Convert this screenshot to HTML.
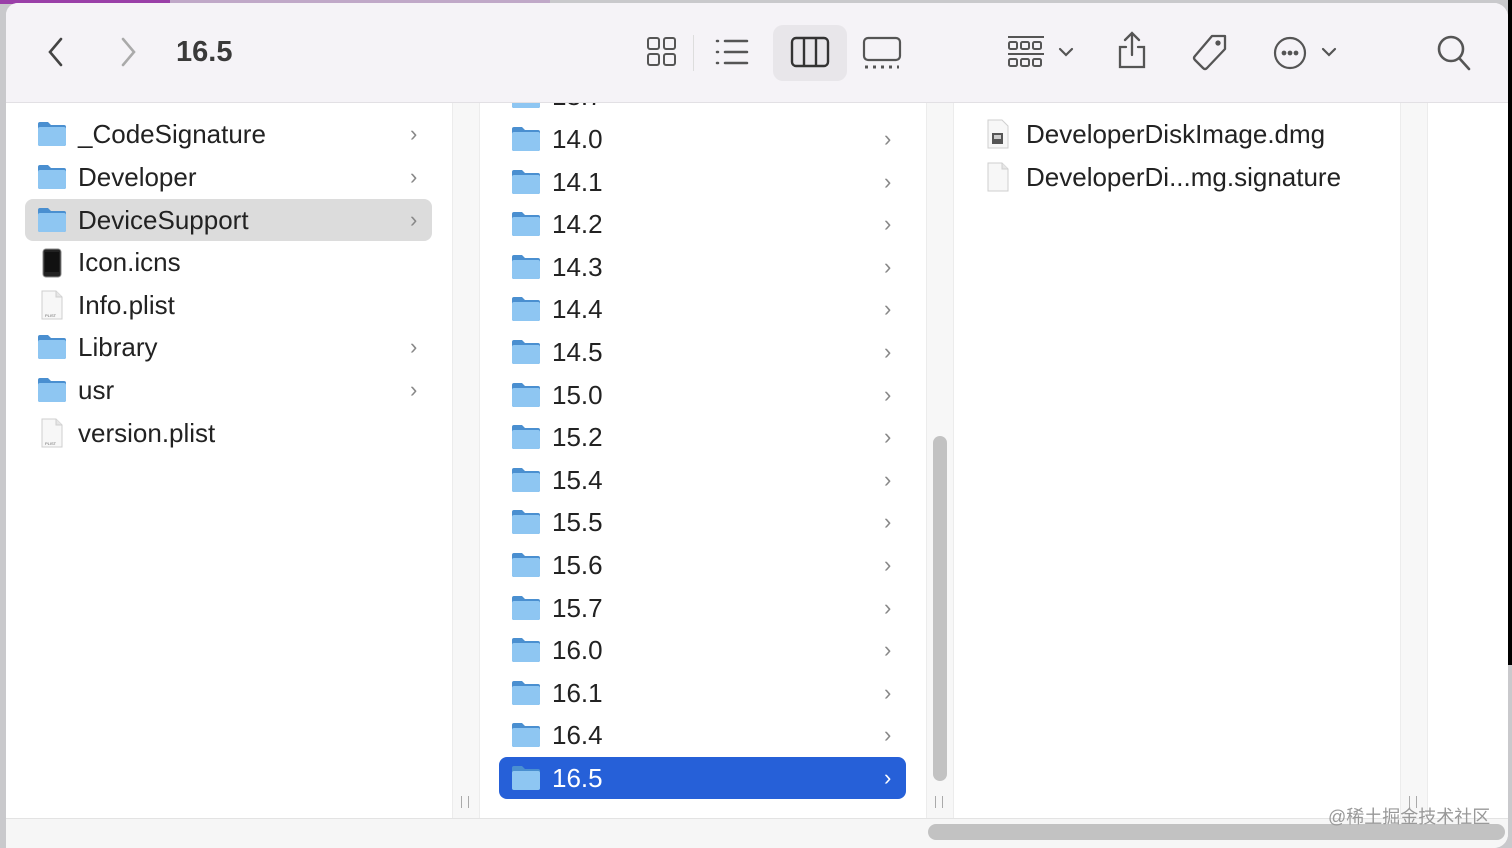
<!DOCTYPE html>
<html><head><meta charset="utf-8">
<style>
*{margin:0;padding:0;box-sizing:border-box}
html,body{width:1512px;height:848px;overflow:hidden;background:#c9c9cc;font-family:"Liberation Sans","Noto Sans CJK SC",sans-serif}
.abs{position:absolute}
#win{position:absolute;left:6px;top:3px;width:1502px;height:845px;background:#fff;border-radius:12px 14px 14px 0;overflow:hidden}
#tb{position:absolute;left:0;top:0;width:1502px;height:100px;background:#f5f3f7;border-bottom:1px solid #e2e0e4}
.row{position:absolute;height:42px;line-height:42px;font-size:26px;color:#222}
.row .ic{position:absolute;top:8px}
.row .t{position:absolute;left:0}
.chev{position:absolute;font-size:22px;color:#888}
.sel{background:#2660d8;color:#fff;border-radius:8px}
.sel .chev{color:#fff}
</style></head><body>
<div class="abs" style="left:0;top:0;width:170px;height:4px;background:#9a3fa8"></div>
<div class="abs" style="left:170px;top:0;width:380px;height:3px;background:#c0a8c8"></div>
<div class="abs" style="left:1508px;top:0;width:4px;height:665px;background:#000"></div>
<svg width="0" height="0" style="position:absolute"><defs>
<symbol id="fold" viewBox="0 0 30 26"><path d="M1 3q0-2 2-2h8l3 3h13q2 0 2 2v17q0 2-2 2H3q-2 0-2-2z" fill="#4a8fd0"/><path d="M1 8q0-2 2-2h24q2 0 2 2v15q0 2-2 2H3q-2 0-2-2z" fill="#8ec6f2"/></symbol>
<symbol id="doc" viewBox="0 0 24 30"><path d="M2 1h14l6 6v22H2z" fill="#f7f7f7" stroke="#cfcfcf"/><path d="M16 1v6h6" fill="#e6e6e6" stroke="#cfcfcf"/></symbol>
</defs></svg>
<div id="win">
<div id="tb">
<svg class="abs" style="left:40px;top:34px" width="20" height="30" viewBox="0 0 20 30"><path d="M15 2L4 15l11 13" fill="none" stroke="#444" stroke-width="2.6" stroke-linecap="round"/></svg>
<svg class="abs" style="left:112px;top:34px" width="20" height="30" viewBox="0 0 20 30"><path d="M5 2l11 13L5 28" fill="none" stroke="#aaa" stroke-width="2.6" stroke-linecap="round"/></svg>
<div class="abs" style="left:170px;top:33px;font-size:29px;font-weight:bold;color:#3a3a3a">16.5</div>
<svg class="abs" style="left:640px;top:33px" width="32" height="32" viewBox="0 0 32 32" fill="none" stroke="#555" stroke-width="2"><rect x="2" y="2" width="11" height="11" rx="2"/><rect x="18" y="2" width="11" height="11" rx="2"/><rect x="2" y="18" width="11" height="11" rx="2"/><rect x="18" y="18" width="11" height="11" rx="2"/></svg>
<div class="abs" style="left:687px;top:32px;width:1px;height:36px;background:#ddd"></div>
<svg class="abs" style="left:708px;top:34px" width="36" height="30" viewBox="0 0 36 30" stroke="#555" stroke-width="2.5" stroke-linecap="round"><path d="M3 4h1M3 15h1M3 26h1M11 4h22M11 15h22M11 26h22"/></svg>
<div class="abs" style="left:767px;top:22px;width:74px;height:56px;background:#e8e6ea;border-radius:10px"></div>
<svg class="abs" style="left:784px;top:33px" width="40" height="32" viewBox="0 0 40 32" fill="none" stroke="#333" stroke-width="2.4"><rect x="2" y="2" width="36" height="28" rx="4"/><path d="M14 2v28M26 2v28"/></svg>
<svg class="abs" style="left:856px;top:33px" width="40" height="34" viewBox="0 0 40 34" fill="none" stroke="#555" stroke-width="2.2"><rect x="2" y="2" width="36" height="22" rx="4"/><path d="M3 31h3M11 31h3M19 31h3M27 31h3M35 31h2" stroke-width="3"/></svg>
<svg class="abs" style="left:1000px;top:32px" width="40" height="36" viewBox="0 0 40 36" fill="none" stroke="#555" stroke-width="2"><path d="M2 2h36"/><rect x="3" y="7" width="8" height="7" rx="1.5"/><rect x="15" y="7" width="8" height="7" rx="1.5"/><rect x="27" y="7" width="8" height="7" rx="1.5"/><path d="M2 19h36"/><rect x="3" y="24" width="8" height="7" rx="1.5"/><rect x="15" y="24" width="8" height="7" rx="1.5"/><rect x="27" y="24" width="8" height="7" rx="1.5"/></svg>
<svg class="abs" style="left:1052px;top:43px" width="16" height="12" viewBox="0 0 16 12"><path d="M2 3l6 6 6-6" fill="none" stroke="#555" stroke-width="2.2" stroke-linecap="round"/></svg>
<svg class="abs" style="left:1110px;top:27px" width="32" height="40" viewBox="0 0 32 40" fill="none" stroke="#555" stroke-width="2.3" stroke-linecap="round"><path d="M16 3v22M9 10l7-7 7 7M10 17H4v20h24V17h-6"/></svg>
<svg class="abs" style="left:1184px;top:30px" width="40" height="40" viewBox="0 0 40 40" fill="none" stroke="#555" stroke-width="2.3"><path d="M22 3h13v13L17 35q-2 2-4 0L5 27q-2-2 0-4z" stroke-linejoin="round"/><circle cx="28" cy="10" r="1.5" fill="#555"/></svg>
<svg class="abs" style="left:1266px;top:32px" width="36" height="36" viewBox="0 0 36 36" fill="none" stroke="#555" stroke-width="2.2"><circle cx="18" cy="18" r="15"/><circle cx="12" cy="18" r="1.3" fill="#555"/><circle cx="18" cy="18" r="1.3" fill="#555"/><circle cx="24" cy="18" r="1.3" fill="#555"/></svg>
<svg class="abs" style="left:1315px;top:43px" width="16" height="12" viewBox="0 0 16 12"><path d="M2 3l6 6 6-6" fill="none" stroke="#555" stroke-width="2.2" stroke-linecap="round"/></svg>
<svg class="abs" style="left:1430px;top:31px" width="36" height="38" viewBox="0 0 36 38" fill="none" stroke="#555" stroke-width="2.6" stroke-linecap="round"><circle cx="15" cy="15" r="12"/><path d="M24 25l9 10"/></svg>
</div>

<div class="abs" style="left:446px;top:100px;width:28px;height:715px;background:#f7f7f7;border-left:1px solid #ececec;border-right:1px solid #ececec"></div>
<div class="abs" style="left:920px;top:100px;width:28px;height:715px;background:#f7f7f7;border-left:1px solid #ececec;border-right:1px solid #ececec"></div>
<div class="abs" style="left:1394px;top:100px;width:28px;height:715px;background:#f7f7f7;border-left:1px solid #ececec;border-right:1px solid #ececec"></div>
<div class="abs" style="left:455px;top:793px;width:8px;height:12px;border-left:1.5px solid #aaa;border-right:1.5px solid #aaa"></div>
<div class="abs" style="left:929px;top:793px;width:8px;height:12px;border-left:1.5px solid #aaa;border-right:1.5px solid #aaa"></div>
<div class="abs" style="left:1403px;top:793px;width:8px;height:12px;border-left:1.5px solid #aaa;border-right:1.5px solid #aaa"></div>
<div class="abs" style="left:927px;top:433px;width:14px;height:345px;background:#c2c2c2;border-radius:7px"></div>
<div class="abs" style="left:0;top:815px;width:1502px;height:30px;background:#f6f6f6;border-top:1px solid #e3e3e3"></div>
<div class="abs" style="left:922px;top:821px;width:577px;height:16px;background:#c2c2c2;border-radius:8px"></div>
<div class="abs" style="left:1322px;top:800px;font-size:18px;color:#999">@稀土掘金技术社区</div>

<div class="row" style="left:20px;top:110px;width:406px"><svg class="ic" style="left:11px" width="30" height="26"><use href="#fold"/></svg><span class="t" style="left:52px">_CodeSignature</span><span class="chev" style="left:384px">›</span></div>
<div class="row" style="left:20px;top:153px;width:406px"><svg class="ic" style="left:11px" width="30" height="26"><use href="#fold"/></svg><span class="t" style="left:52px">Developer</span><span class="chev" style="left:384px">›</span></div>
<div class="row" style="left:19px;top:196px;width:407px;background:#dcdcdc;border-radius:8px"><svg class="ic" style="left:12px" width="30" height="26"><use href="#fold"/></svg><span class="t" style="left:53px">DeviceSupport</span><span class="chev" style="left:385px">›</span></div>
<div class="row" style="left:20px;top:238px;width:406px"><svg class="ic" style="left:16px;top:7px" width="20" height="30" viewBox="0 0 20 30"><rect x="1" y="1" width="18" height="28" rx="3" fill="#222" stroke="#888"/><rect x="3" y="4" width="14" height="20" fill="#111"/></svg><span class="t" style="left:52px">Icon.icns</span></div>
<div class="row" style="left:20px;top:281px;width:406px"><svg class="ic" style="left:14px;top:6px" width="24" height="30"><use href="#doc"/><text x="5" y="27" font-size="4" fill="#666">PLIST</text></svg><span class="t" style="left:52px">Info.plist</span></div>
<div class="row" style="left:20px;top:323px;width:406px"><svg class="ic" style="left:11px" width="30" height="26"><use href="#fold"/></svg><span class="t" style="left:52px">Library</span><span class="chev" style="left:384px">›</span></div>
<div class="row" style="left:20px;top:366px;width:406px"><svg class="ic" style="left:11px" width="30" height="26"><use href="#fold"/></svg><span class="t" style="left:52px">usr</span><span class="chev" style="left:384px">›</span></div>
<div class="row" style="left:20px;top:409px;width:406px"><svg class="ic" style="left:14px;top:6px" width="24" height="30"><use href="#doc"/><text x="5" y="27" font-size="4" fill="#666">PLIST</text></svg><span class="t" style="left:52px">version.plist</span></div>

<div class="abs" style="left:474px;top:100px;width:446px;height:715px;overflow:hidden">
<div class="row" style="left:19px;top:-28px;width:407px"><svg class="ic" style="left:12px" width="30" height="26"><use href="#fold"/></svg><span class="t" style="left:53px">13.7</span></div>
<div class="row" style="left:19px;top:15px;width:407px"><svg class="ic" style="left:12px" width="30" height="26"><use href="#fold"/></svg><span class="t" style="left:53px">14.0</span><span class="chev" style="left:385px">›</span></div>
<div class="row" style="left:19px;top:58px;width:407px"><svg class="ic" style="left:12px" width="30" height="26"><use href="#fold"/></svg><span class="t" style="left:53px">14.1</span><span class="chev" style="left:385px">›</span></div>
<div class="row" style="left:19px;top:100px;width:407px"><svg class="ic" style="left:12px" width="30" height="26"><use href="#fold"/></svg><span class="t" style="left:53px">14.2</span><span class="chev" style="left:385px">›</span></div>
<div class="row" style="left:19px;top:143px;width:407px"><svg class="ic" style="left:12px" width="30" height="26"><use href="#fold"/></svg><span class="t" style="left:53px">14.3</span><span class="chev" style="left:385px">›</span></div>
<div class="row" style="left:19px;top:185px;width:407px"><svg class="ic" style="left:12px" width="30" height="26"><use href="#fold"/></svg><span class="t" style="left:53px">14.4</span><span class="chev" style="left:385px">›</span></div>
<div class="row" style="left:19px;top:228px;width:407px"><svg class="ic" style="left:12px" width="30" height="26"><use href="#fold"/></svg><span class="t" style="left:53px">14.5</span><span class="chev" style="left:385px">›</span></div>
<div class="row" style="left:19px;top:271px;width:407px"><svg class="ic" style="left:12px" width="30" height="26"><use href="#fold"/></svg><span class="t" style="left:53px">15.0</span><span class="chev" style="left:385px">›</span></div>
<div class="row" style="left:19px;top:313px;width:407px"><svg class="ic" style="left:12px" width="30" height="26"><use href="#fold"/></svg><span class="t" style="left:53px">15.2</span><span class="chev" style="left:385px">›</span></div>
<div class="row" style="left:19px;top:356px;width:407px"><svg class="ic" style="left:12px" width="30" height="26"><use href="#fold"/></svg><span class="t" style="left:53px">15.4</span><span class="chev" style="left:385px">›</span></div>
<div class="row" style="left:19px;top:398px;width:407px"><svg class="ic" style="left:12px" width="30" height="26"><use href="#fold"/></svg><span class="t" style="left:53px">15.5</span><span class="chev" style="left:385px">›</span></div>
<div class="row" style="left:19px;top:441px;width:407px"><svg class="ic" style="left:12px" width="30" height="26"><use href="#fold"/></svg><span class="t" style="left:53px">15.6</span><span class="chev" style="left:385px">›</span></div>
<div class="row" style="left:19px;top:484px;width:407px"><svg class="ic" style="left:12px" width="30" height="26"><use href="#fold"/></svg><span class="t" style="left:53px">15.7</span><span class="chev" style="left:385px">›</span></div>
<div class="row" style="left:19px;top:526px;width:407px"><svg class="ic" style="left:12px" width="30" height="26"><use href="#fold"/></svg><span class="t" style="left:53px">16.0</span><span class="chev" style="left:385px">›</span></div>
<div class="row" style="left:19px;top:569px;width:407px"><svg class="ic" style="left:12px" width="30" height="26"><use href="#fold"/></svg><span class="t" style="left:53px">16.1</span><span class="chev" style="left:385px">›</span></div>
<div class="row" style="left:19px;top:611px;width:407px"><svg class="ic" style="left:12px" width="30" height="26"><use href="#fold"/></svg><span class="t" style="left:53px">16.4</span><span class="chev" style="left:385px">›</span></div>
<div class="row sel" style="left:19px;top:654px;width:407px"><svg class="ic" style="left:12px" width="30" height="26"><use href="#fold"/></svg><span class="t" style="left:53px">16.5</span><span class="chev" style="left:385px">›</span></div>
</div>

<div class="row" style="left:968px;top:110px;width:420px"><svg class="ic" style="left:12px;top:6px" width="24" height="30" viewBox="0 0 24 30"><path d="M2 1h14l6 6v22H2z" fill="#f7f7f7" stroke="#cfcfcf"/><rect x="6" y="14" width="11" height="11" fill="#555"/><rect x="8" y="16" width="7" height="4" fill="#ccc"/></svg><span class="t" style="left:52px">DeveloperDiskImage.dmg</span></div>
<div class="row" style="left:968px;top:153px;width:420px"><svg class="ic" style="left:12px;top:6px" width="24" height="30"><use href="#doc"/></svg><span class="t" style="left:52px">DeveloperDi...mg.signature</span></div>
</div>
</body></html>
